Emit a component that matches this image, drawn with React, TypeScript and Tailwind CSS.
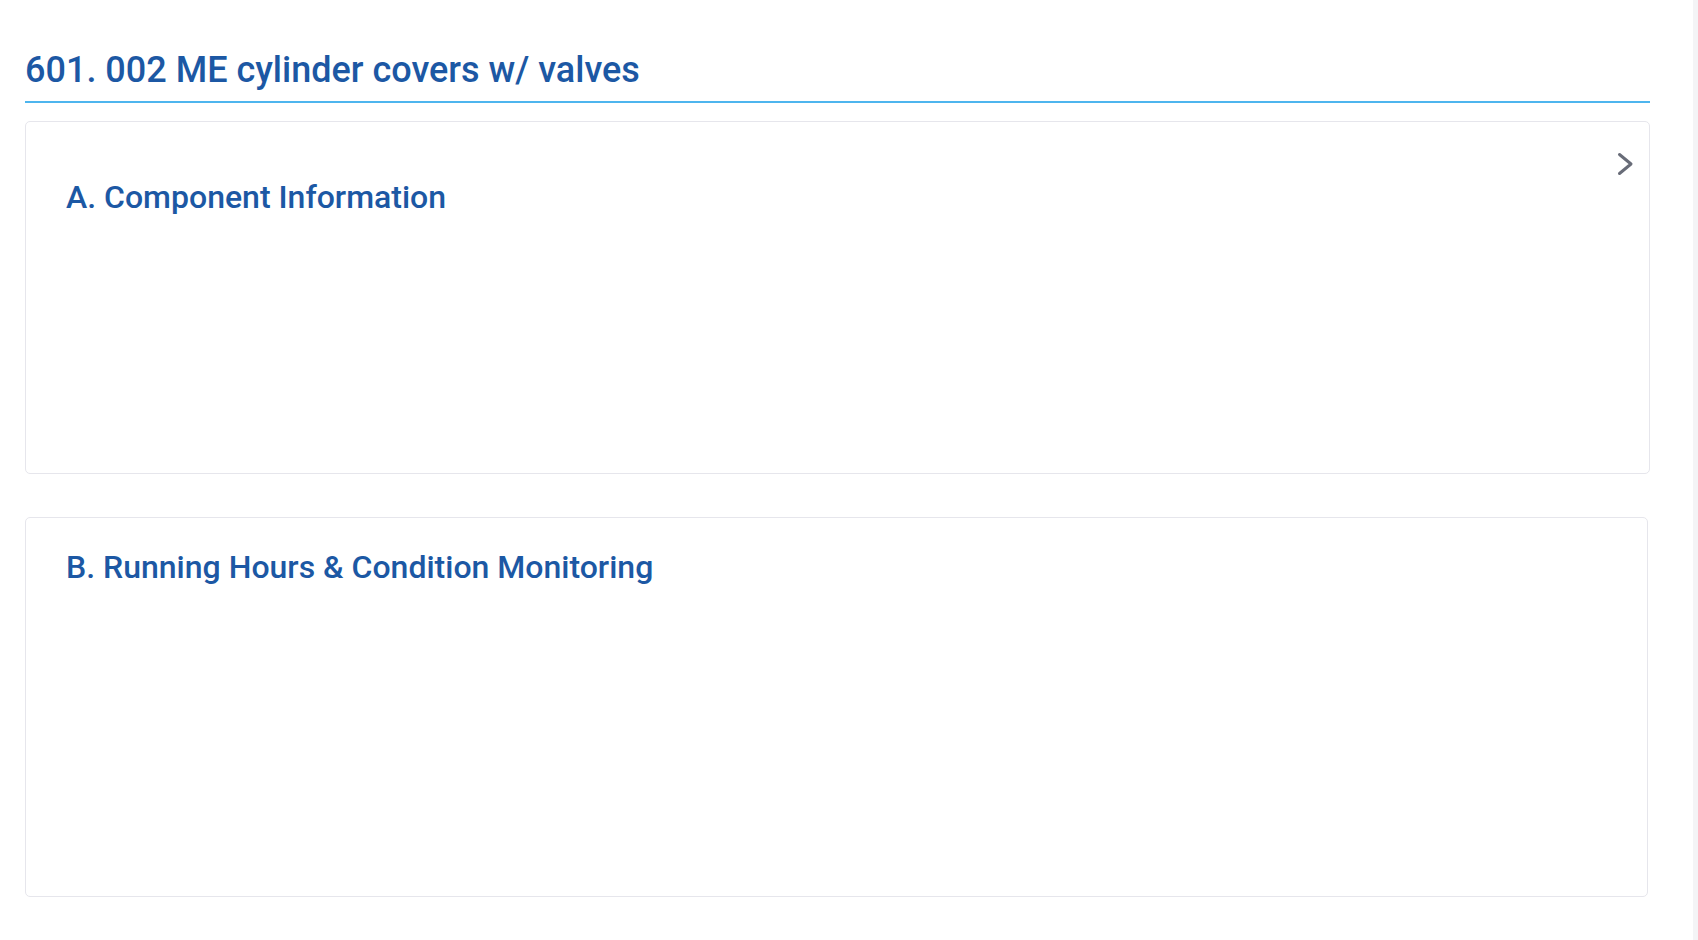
import React from "react";

function Chevron() {
  return (
    <svg width="18" height="24" viewBox="0 0 18 24" fill="none" className="block">
      <polyline
        points="3.5,2.5 15,12 3.5,21.5"
        stroke="#686c78"
        strokeWidth="3"
        strokeLinecap="round"
        strokeLinejoin="round"
      />
    </svg>
  );
}

export default function App() {
  return (
    <div
      className="flex min-h-[940px] w-full bg-white"
      style={{ fontFamily: "Roboto, 'Noto Sans', sans-serif" }}
    >
      <main className="flex-1 pl-[25px] pr-[43px]">
        <h1 className="pt-[52px] pb-[13px] border-b-2 border-[#4db5ee] text-[36px] leading-none font-medium text-[#1c58a4]">
          601. 002 ME cylinder covers w/ valves
        </h1>

        <section className="mt-[18px] h-[353px] rounded-[5px] border border-[#e6e6ec] bg-white pl-[40px] pr-[15px] pt-[30px]">
          <div className="flex h-[24px] justify-end">
            <Chevron />
          </div>
          <h2 className="mt-[5px] text-[32px] leading-none font-medium text-[#1c58a4]">
            A. Component Information
          </h2>
        </section>

        <section className="mt-[43px] mr-[2px] h-[380px] rounded-[5px] border border-[#e6e6ec] bg-white pl-[40px] pt-[33px]">
          <h2 className="text-[32px] leading-none font-medium text-[#1c58a4]">
            B. Running Hours &amp; Condition Monitoring
          </h2>
        </section>
      </main>
      <div className="w-[5px] bg-[#f4f4f6]" />
    </div>
  );
}
